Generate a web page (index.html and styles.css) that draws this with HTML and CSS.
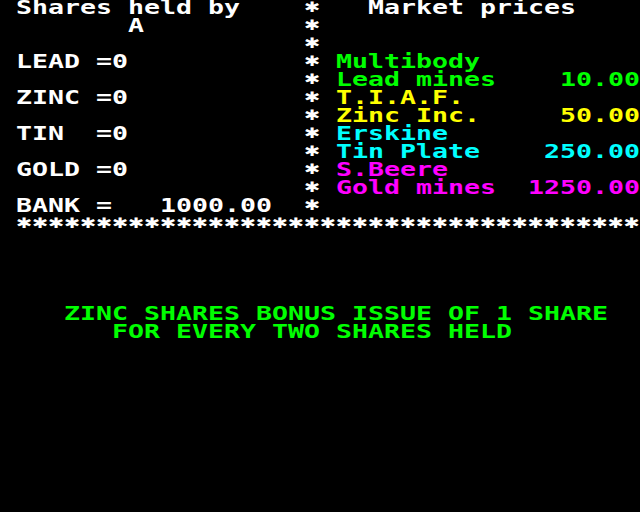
FILE: index.html
```html
<!DOCTYPE html>
<html>
<head>
<meta charset="utf-8">
<link rel="stylesheet" href="styles.css">
</head>
<body>
<div class="screen">
<div class="line w"> Shares held by    <i class="st">✱</i>   Market prices</div>
<div class="line w">        A          <i class="st">✱</i></div>
<div class="line w">                   <i class="st">✱</i></div>
<div class="line w"> LEAD =0           <i class="st">✱</i> <span class="g">Multibody</span></div>
<div class="line w">                   <i class="st">✱</i> <span class="g">Lead mines    10.00</span></div>
<div class="line w"> ZINC =0           <i class="st">✱</i> <span class="y">T.I.A.F.</span></div>
<div class="line w">                   <i class="st">✱</i> <span class="y">Zinc Inc.     50.00</span></div>
<div class="line w"> TIN  =0           <i class="st">✱</i> <span class="c">Erskine</span></div>
<div class="line w">                   <i class="st">✱</i> <span class="c">Tin Plate    250.00</span></div>
<div class="line w"> GOLD =0           <i class="st">✱</i> <span class="m">S.Beere</span></div>
<div class="line w">                   <i class="st">✱</i> <span class="m">Gold mines  1250.00</span></div>
<div class="line w"> BANK =   1000.00  <i class="st">✱</i></div>
<div class="line w"> <i class="st">✱</i><i class="st">✱</i><i class="st">✱</i><i class="st">✱</i><i class="st">✱</i><i class="st">✱</i><i class="st">✱</i><i class="st">✱</i><i class="st">✱</i><i class="st">✱</i><i class="st">✱</i><i class="st">✱</i><i class="st">✱</i><i class="st">✱</i><i class="st">✱</i><i class="st">✱</i><i class="st">✱</i><i class="st">✱</i><i class="st">✱</i><i class="st">✱</i><i class="st">✱</i><i class="st">✱</i><i class="st">✱</i><i class="st">✱</i><i class="st">✱</i><i class="st">✱</i><i class="st">✱</i><i class="st">✱</i><i class="st">✱</i><i class="st">✱</i><i class="st">✱</i><i class="st">✱</i><i class="st">✱</i><i class="st">✱</i><i class="st">✱</i><i class="st">✱</i><i class="st">✱</i><i class="st">✱</i><i class="st">✱</i></div>
<div class="line"></div>
<div class="line"></div>
<div class="line"></div>
<div class="line"></div>
<div class="line g">    ZINC SHARES BONUS ISSUE OF 1 SHARE</div>
<div class="line g">       FOR EVERY TWO SHARES HELD</div>
</div>
</body>
</html>
```
FILE: styles.css
```css
html, body {
  margin: 0;
  padding: 0;
  background: #000;
  width: 640px;
  height: 512px;
  overflow: hidden;
}
.screen {
  width: 481.6px;
  margin-top: -2px;
  transform: scaleX(1.3288);
  transform-origin: 0 0;
  font-family: "DejaVu Sans Mono", "Liberation Mono", monospace;
  font-weight: bold;
  font-size: 20px;
  line-height: 18px;
  color: #fff;
}
.line {
  white-space: pre;
  height: 18px;
}
.w { color: #fff; }
.g { color: #00ff00; }
.y { color: #ffff00; }
.c { color: #00ffff; }
.m { color: #ff00ff; }
.st {
  display: inline-block;
  width: 12.04px;
  height: 18px;
  line-height: 18px;
  vertical-align: top;
  text-align: center;
  font-style: normal;
  font-family: "DejaVu Sans", sans-serif;
  font-weight: bold;
  font-size: 14.5px;
  color: #fff;
}
```
